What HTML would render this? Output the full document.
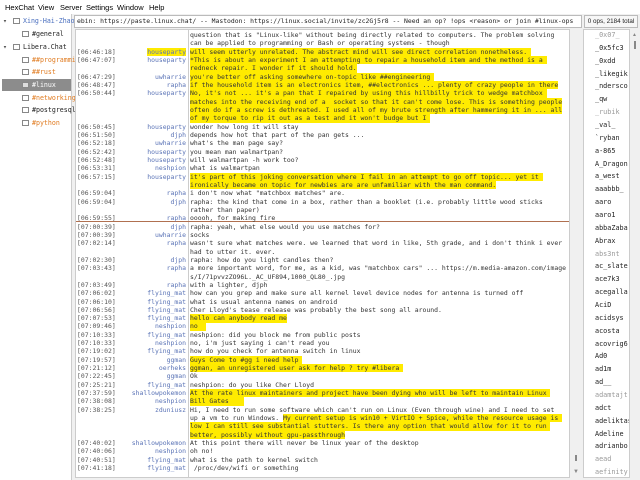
<!DOCTYPE html>
<html><head><meta charset="utf-8"><style>
*{margin:0;padding:0;box-sizing:border-box}
body{width:640px;height:480px;background:#f0f0f0;position:relative;overflow:hidden;font-family:"Liberation Sans",sans-serif}
.menu{position:absolute;top:0;left:0;width:640px;height:14px;background:#fff;font-size:7.5px;color:#000}
.menu span{position:absolute;top:3px}
.left{position:absolute;left:0;top:14px;width:72px;height:466px;background:#fff;border-right:1px solid #ccc;font-family:"DejaVu Sans Mono",monospace;font-size:6.6px}
.left div{position:absolute;height:12px;line-height:12px;white-space:nowrap;overflow:hidden}
.ic{display:inline-block;width:7px;height:6px;border:1px solid #888;margin-right:3px;vertical-align:-1px;background:#fff}
.topic{position:absolute;left:74px;top:15px;width:508px;height:13px;background:#fff;border:1px solid #bbb;font-family:"DejaVu Sans Mono",monospace;font-size:6.4px;line-height:11px;padding-left:2px;white-space:nowrap;overflow:hidden;color:#222}
.ops{position:absolute;left:584px;top:15px;width:54px;height:13px;border:1px solid #bbb;background:#f7f7f7;font-size:6.3px;line-height:11px;text-align:center;color:#222}
.chat{position:absolute;left:75px;top:29px;width:495px;height:449px;background:#fff;border:1px solid #ccc;overflow:hidden}
.sep{position:absolute;left:112px;top:0;width:1px;height:449px;background:#ccc}
.lines{position:absolute;left:0;top:0;font-family:"DejaVu Sans Mono",monospace;font-size:6.45px;line-height:8.34px;color:#333}
.l{position:relative;height:8.34px;white-space:pre;width:495px}
.ts{position:absolute;left:1px;color:#555}
.nk{position:absolute;right:385px;color:#5a73b6;text-align:right}
.tx{position:absolute;left:114px}
.h{background:#ffeb00}
.mark{position:absolute;left:0;top:191px;width:495px;height:1px;background:#b07050}
.csb{position:absolute;left:571px;top:29px;width:11px;height:449px;background:#f0f0f0}
.users{position:absolute;left:583px;top:29px;width:47px;height:449px;background:#fff;border:1px solid #ccc;font-family:"DejaVu Sans Mono",monospace;font-size:6.8px;color:#222;overflow:hidden}
.users div{position:absolute;left:11px;white-space:nowrap}
.g{color:#999}
.usb{position:absolute;left:630px;top:29px;width:10px;height:449px;background:#f0f0f0}
</style></head><body>
<div class="menu"><span style="left:5px">HexChat</span><span style="left:38px">View</span><span style="left:60px">Server</span><span style="left:86px">Settings</span><span style="left:117px">Window</span><span style="left:149px">Help</span></div>
<div class="left">
<div style="top:1px;left:3px;color:#555">▾</div><div style="top:1px;left:13px;color:#4a6fbf"><span class="ic"></span>Xing-Hai-Zhao</div>
<div style="top:14px;left:22px;color:#222"><span class="ic"></span>#general</div>
<div style="top:27px;left:3px;color:#555">▾</div><div style="top:27px;left:13px;color:#222"><span class="ic"></span>Libera.Chat</div>
<div style="top:40px;left:22px;color:#e07b20"><span class="ic"></span>##programming</div>
<div style="top:52px;left:22px;color:#e07b20"><span class="ic"></span>##rust</div>
<div style="top:65px;left:2px;width:69px;background:#8c8c8c;color:#fff;padding-left:20px"><span class="ic" style="background:#ddd"></span>#linux</div>
<div style="top:78px;left:22px;color:#e07b20"><span class="ic"></span>#networking</div>
<div style="top:90px;left:22px;color:#222"><span class="ic"></span>#postgresql</div>
<div style="top:103px;left:22px;color:#e07b20"><span class="ic"></span>#python</div>
</div>
<div class="topic">ebin: https://paste.linux.chat/ -- Mastodon: https://linux.social/invite/zc2Gj5r8 -- Need an op? !ops &lt;reason&gt; or join #linux-ops</div>
<div class="ops">0 ops, 2184 total</div>
<div class="chat"><div class="sep"></div><div class="mark"></div>
<div class="lines" style="top:1px">
<div class="l"><span class="tx">question that is "Linux-like" without being directly related to computers. The problem solving</span></div>
<div class="l"><span class="tx">can be applied to programming or Bash or operating systems - though</span></div>
<div class="l"><span class="ts">[06:46:18]</span><span class="nk h">houseparty</span><span class="tx h">will seem utterly unrelated. The abstract mind will see direct correlation nonetheless. </span></div>
<div class="l"><span class="ts">[06:47:07]</span><span class="nk">houseparty</span><span class="tx h">*This is about an experiment I am attempting to repair a household item and the method is a </span></div>
<div class="l"><span class="tx h">redneck repair. I wonder if it should hold.</span></div>
<div class="l"><span class="ts">[06:47:29]</span><span class="nk">uwharrie</span><span class="tx h">you're better off asking somewhere on-topic like ##engineering </span></div>
<div class="l"><span class="ts">[06:48:47]</span><span class="nk">rapha</span><span class="tx h">if the household item is an electronics item, ##electronics ... plenty of crazy people in there</span></div>
<div class="l"><span class="ts">[06:50:44]</span><span class="nk">houseparty</span><span class="tx h">No, it's not ... it's a pan that I repaired by using this hillbilly trick to wedge matchbox </span></div>
<div class="l"><span class="tx h">matches into the receiving end of a  socket so that it can't come lose. This is something people</span></div>
<div class="l"><span class="tx h">often do if a screw is dethreated. I used all of my brute strength after hammering it in ... all</span></div>
<div class="l"><span class="tx h">of my torque to rip it out as a test and it won't budge but I </span></div>
<div class="l"><span class="ts">[06:50:45]</span><span class="nk">houseparty</span><span class="tx">wonder how long it will stay</span></div>
<div class="l"><span class="ts">[06:51:50]</span><span class="nk">djph</span><span class="tx">depends how hot that part of the pan gets ...</span></div>
<div class="l"><span class="ts">[06:52:18]</span><span class="nk">uwharrie</span><span class="tx">what's the man page say?</span></div>
<div class="l"><span class="ts">[06:52:42]</span><span class="nk">houseparty</span><span class="tx">you mean man walmartpan?</span></div>
<div class="l"><span class="ts">[06:52:48]</span><span class="nk">houseparty</span><span class="tx">will walmartpan -h work too?</span></div>
<div class="l"><span class="ts">[06:53:31]</span><span class="nk">neshpion</span><span class="tx">what is walmartpan</span></div>
<div class="l"><span class="ts">[06:57:15]</span><span class="nk">houseparty</span><span class="tx h">it's part of this joking conversation where I fail in an attempt to go off topic... yet it </span></div>
<div class="l"><span class="tx h">ironically became on topic for newbies are are unfamiliar with the man command.</span></div>
<div class="l"><span class="ts">[06:59:04]</span><span class="nk">rapha</span><span class="tx">i don't now what "matchbox matches" are.</span></div>
<div class="l"><span class="ts">[06:59:04]</span><span class="nk">djph</span><span class="tx">rapha: the kind that come in a box, rather than a booklet (i.e. probably little wood sticks</span></div>
<div class="l"><span class="tx">rather than paper)</span></div>
<div class="l"><span class="ts">[06:59:55]</span><span class="nk">rapha</span><span class="tx">ooooh, for making fire</span></div>
<div class="l"><span class="ts">[07:00:39]</span><span class="nk">djph</span><span class="tx">rapha: yeah, what else would you use matches for?</span></div>
<div class="l"><span class="ts">[07:00:39]</span><span class="nk">uwharrie</span><span class="tx">socks</span></div>
<div class="l"><span class="ts">[07:02:14]</span><span class="nk">rapha</span><span class="tx">wasn't sure what matches were. we learned that word in like, 5th grade, and i don't think i ever</span></div>
<div class="l"><span class="tx">had to utter it. ever.</span></div>
<div class="l"><span class="ts">[07:02:30]</span><span class="nk">djph</span><span class="tx">rapha: how do you light candles then?</span></div>
<div class="l"><span class="ts">[07:03:43]</span><span class="nk">rapha</span><span class="tx">a more important word, for me, as a kid, was "matchbox cars" ... https://m.media-amazon.com/image</span></div>
<div class="l"><span class="tx">s/I/71pvvzZO96L._AC_UF894,1000_QL80_.jpg</span></div>
<div class="l"><span class="ts">[07:03:49]</span><span class="nk">rapha</span><span class="tx">with a lighter, djph</span></div>
<div class="l"><span class="ts">[07:06:02]</span><span class="nk">flying_mat</span><span class="tx">how can you grep and make sure all kernel level device nodes for antenna is turned off</span></div>
<div class="l"><span class="ts">[07:06:10]</span><span class="nk">flying_mat</span><span class="tx">what is usual antenna names on android</span></div>
<div class="l"><span class="ts">[07:06:56]</span><span class="nk">flying_mat</span><span class="tx">Cher Lloyd's tease release was probably the best song all around.</span></div>
<div class="l"><span class="ts">[07:07:53]</span><span class="nk">flying_mat</span><span class="tx h">hello can anybody read me</span></div>
<div class="l"><span class="ts">[07:09:46]</span><span class="nk">neshpion</span><span class="tx h">no  </span></div>
<div class="l"><span class="ts">[07:10:33]</span><span class="nk">flying_mat</span><span class="tx">neshpion: did you block me from public posts</span></div>
<div class="l"><span class="ts">[07:10:33]</span><span class="nk">neshpion</span><span class="tx">no, i'm just saying i can't read you</span></div>
<div class="l"><span class="ts">[07:19:02]</span><span class="nk">flying_mat</span><span class="tx">how do you check for antenna switch in linux</span></div>
<div class="l"><span class="ts">[07:19:57]</span><span class="nk">ggman</span><span class="tx h">Guys Come to #gg i need help </span></div>
<div class="l"><span class="ts">[07:21:12]</span><span class="nk">oerheks</span><span class="tx h">ggman, an unregistered user ask for help ? try #libera </span></div>
<div class="l"><span class="ts">[07:22:45]</span><span class="nk">ggman</span><span class="tx">Ok</span></div>
<div class="l"><span class="ts">[07:25:21]</span><span class="nk">flying_mat</span><span class="tx">neshpion: do you like Cher Lloyd</span></div>
<div class="l"><span class="ts">[07:37:59]</span><span class="nk">shallowpokemon</span><span class="tx h">At the rate linux maintainers and project have been dying who will be left to maintain Linux </span></div>
<div class="l"><span class="ts">[07:38:08]</span><span class="nk">neshpion</span><span class="tx h">Bill Gates    </span></div>
<div class="l"><span class="ts">[07:38:25]</span><span class="nk">zduniusz</span><span class="tx">Hi, I need to run some software which can't run on Linux (Even through wine) and I need to set</span></div>
<div class="l"><span class="tx">up a vm to run Windows. <span class="h">My current setup is win10 + VirtIO + Spice, while the resource usage is </span></span></div>
<div class="l"><span class="tx h">low I can still see substantial stutters. Is there any option that would allow for it to run </span></div>
<div class="l"><span class="tx h">better, possibly without gpu-passthrough</span></div>
<div class="l"><span class="ts">[07:40:02]</span><span class="nk">shallowpokemon</span><span class="tx">At this point there will never be linux year of the desktop</span></div>
<div class="l"><span class="ts">[07:40:06]</span><span class="nk">neshpion</span><span class="tx">oh no!</span></div>
<div class="l"><span class="ts">[07:40:51]</span><span class="nk">flying_mat</span><span class="tx">what is the path to kernel switch</span></div>
<div class="l"><span class="ts">[07:41:18]</span><span class="nk">flying_mat</span><span class="tx"> /proc/dev/wifi or something</span></div>
</div></div>
<div class="csb"><div style="position:absolute;left:4px;top:426px;width:2px;height:6px;background:#888"></div><div style="position:absolute;left:2px;top:440px;font-size:6px;color:#888">▼</div></div>
<div class="users">
<div class="g" style="top:1px">_0x07_</div><div style="top:14px">_0x5fc3</div><div style="top:27px">_0xdd</div><div style="top:40px">_likegik</div><div style="top:52px">_ndersco</div><div style="top:65px">_qw</div><div class="g" style="top:78px">_rubik</div><div style="top:91px">_val_</div><div style="top:104px">`ryban</div><div style="top:117px">a-865</div><div style="top:130px">A_Dragon</div><div style="top:142px">a_west</div><div style="top:155px">aaabbb_</div><div style="top:168px">aaro</div><div style="top:181px">aaro1</div><div style="top:194px">abbaZaba</div><div style="top:207px">Abrax</div><div class="g" style="top:220px">abs3nt</div><div style="top:232px">ac_slate</div><div style="top:245px">ace7k3</div><div style="top:258px">acegalla</div><div style="top:271px">AciD</div><div style="top:284px">acidsys</div><div style="top:297px">acosta</div><div style="top:310px">acovrig6</div><div style="top:322px">Ad0</div><div style="top:335px">ad1m</div><div style="top:348px">ad__</div><div class="g" style="top:361px">adamtajt</div><div style="top:374px">adct</div><div style="top:387px">adeliktas</div><div style="top:400px">Adeline</div><div style="top:412px">adrianbo</div><div class="g" style="top:425px">aead</div><div class="g" style="top:438px">aefinity</div>
</div>
<div class="usb"><div style="position:absolute;left:2px;top:3px;font-size:5px;color:#888">▲</div><div style="position:absolute;left:4px;top:12px;width:2px;height:8px;background:#888"></div></div>
</body></html>
